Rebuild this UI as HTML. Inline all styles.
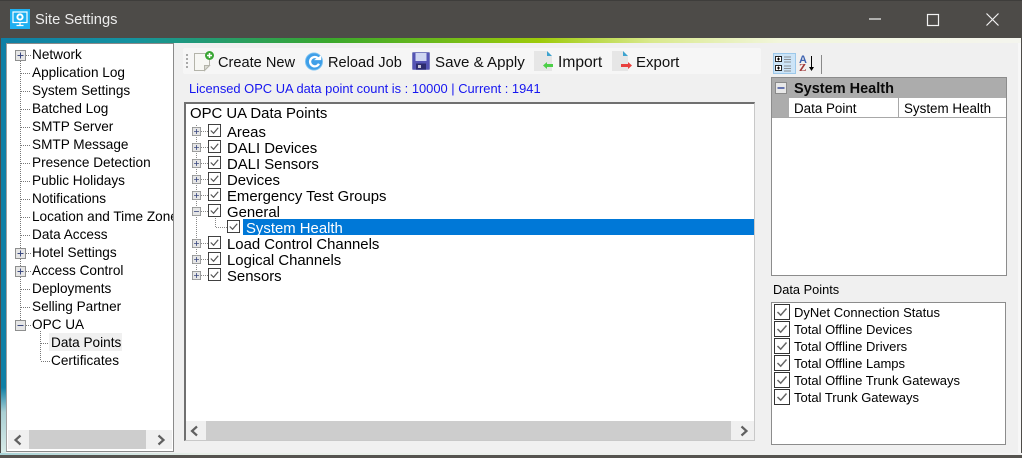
<!DOCTYPE html>
<html><head><meta charset="utf-8"><title>Site Settings</title>
<style>
html,body{margin:0;padding:0;width:1022px;height:458px;overflow:hidden;background:#f0f0f0}
body{position:relative;font-family:"Liberation Sans",sans-serif;color:#000}
div,span,svg{position:absolute}
.t{white-space:nowrap;line-height:18px;height:18px}
.l{font-size:13.6px}
.m{font-size:14.9px}
.r{font-size:13px}
.b{line-height:20px;height:20px;top:53px;color:#111}
</style></head><body>
<svg width="0" height="0" style="position:absolute">
<defs>
<symbol id="p" viewBox="0 0 11 11"><rect x=".5" y=".5" width="10" height="10" fill="#e6e6e6" stroke="#8e8f8f"/><path d="M2.500 5.500h6M5.500 2.500v6" stroke="#3c4a80" fill="none"/></symbol>
<symbol id="n" viewBox="0 0 11 11"><rect x=".5" y=".5" width="10" height="10" fill="#e6e6e6" stroke="#8e8f8f"/><path d="M2.500 5.500h6" stroke="#3c4a80" fill="none"/></symbol>
<symbol id="c" viewBox="0 0 14 14"><rect x=".5" y=".5" width="13" height="13" fill="#fff" stroke="#333"/><path d="M3 7l3 3 5-6" stroke="#555" stroke-width="1.300" fill="none"/></symbol>
<symbol id="d" viewBox="0 0 16 16"><rect x=".5" y=".5" width="15" height="15" fill="#fff" stroke="#333"/><path d="M3.500 8l3.200 3.200 5.800-6.700" stroke="#666" stroke-width="1.500" fill="none"/></symbol>
</defs></svg>

<!-- title bar -->
<div style="left:0;top:0;width:1022px;height:38px;background:#4d4b48;border-top:1px solid #3e3d3b;box-sizing:border-box"></div>
<svg style="left:10px;top:9px" width="20" height="20" viewBox="0 0 20 20"><rect width="20" height="20" fill="#1fb0f0"/><rect x="3" y="3" width="14" height="10.500" fill="none" stroke="#fff" stroke-width="1.200"/><circle cx="10" cy="8" r="2.600" fill="none" stroke="#fff" stroke-width="2"/><path d="M10 13.500v2.500M6.500 16.500h7" stroke="#fff" stroke-width="1.300"/></svg>
<div class="t" style="left:35px;top:10px;font-size:14.700px;line-height:20px;height:20px;color:#ececec">Site Settings</div>
<svg style="left:860px;top:8px" width="150" height="24" viewBox="0 0 150 24" fill="none" stroke="#f2f2f2" stroke-width="1.200"><path d="M9 11h12"/><rect x="67.500" y="6.500" width="11" height="11"/><path d="M126.500 5.500l12 12M138.500 5.500l-12 12"/></svg>

<!-- coloured frame -->
<div style="left:0;top:38px;width:1022px;height:5px;background:linear-gradient(90deg,#0f7fa5 0,#1492a0 130px,#3aa82c 330px,#9ecb0a 540px,#d9e98c 650px,#f2f6dc 780px,#f4f5ee 1022px)"></div>
<div style="left:0;top:38px;width:1px;height:420px;background:#4d4b48"></div>
<div style="left:1px;top:43px;width:5px;height:410px;background:linear-gradient(180deg,#0f7fa5 0,#0f7fa5 84%,#a9cfd3 90%,#d8ebe8 100%)"></div>
<div style="left:1018px;top:43px;width:3px;height:410px;background:#f7f7f7"></div>
<div style="left:1021px;top:38px;width:1px;height:420px;background:#4d4b48"></div>
<div style="left:0;top:453px;width:1022px;height:2px;background:linear-gradient(90deg,#a8d3d6,#e8efe8 200px,#f2f2f2 1022px)"></div>
<div style="left:0;top:455px;width:1022px;height:3px;background:#55534f"></div>

<!-- left tree -->
<div style="left:6px;top:43px;width:168px;height:409px;box-sizing:border-box;background:#fff;border:1px solid #8a8a8a;border-left-color:#a0a0a0"></div>
<div style="left:49px;top:333px;width:73px;height:18px;background:#f0f0f0"></div>
<svg style="left:0;top:1px" width="180" height="380" fill="none" stroke="#777" stroke-dasharray="1 1"><path d="M20.500 60v260M26 54.500h5M21 72.500h10M21 90.500h10M21 108.500h10M21 126.500h10M21 144.500h10M21 162.500h10M21 180.500h10M21 198.500h10M21 216.500h10M21 234.500h10M26 252.500h5M26 270.500h5M21 288.500h10M21 306.500h10M26 324.500h5M40.500 330v30M41 342.500h8M41 360.500h9"/></svg>
<svg style="left:15px;top:50px" width="11" height="11"><use href="#p"/></svg>
<svg style="left:15px;top:248px" width="11" height="11"><use href="#p"/></svg>
<svg style="left:15px;top:266px" width="11" height="11"><use href="#p"/></svg>
<svg style="left:15px;top:320px" width="11" height="11"><use href="#n"/></svg>
<div class="t l" style="left:32px;top:46px">Network</div>
<div class="t l" style="left:32px;top:64px">Application Log</div>
<div class="t l" style="left:32px;top:82px">System Settings</div>
<div class="t l" style="left:32px;top:100px">Batched Log</div>
<div class="t l" style="left:32px;top:118px">SMTP Server</div>
<div class="t l" style="left:32px;top:136px">SMTP Message</div>
<div class="t l" style="left:32px;top:154px">Presence Detection</div>
<div class="t l" style="left:32px;top:172px">Public Holidays</div>
<div class="t l" style="left:32px;top:190px">Notifications</div>
<div class="t l" style="left:32px;top:208px;width:141px;overflow:hidden">Location and Time Zone</div>
<div class="t l" style="left:32px;top:226px">Data Access</div>
<div class="t l" style="left:32px;top:244px">Hotel Settings</div>
<div class="t l" style="left:32px;top:262px">Access Control</div>
<div class="t l" style="left:32px;top:280px">Deployments</div>
<div class="t l" style="left:32px;top:298px">Selling Partner</div>
<div class="t l" style="left:32px;top:316px">OPC UA</div>
<div class="t l" style="left:51px;top:334px">Data Points</div>
<div class="t l" style="left:51px;top:352px">Certificates</div>
<!-- left scrollbar -->
<div style="left:8px;top:430px;width:164px;height:19px;background:#f0f0f0"></div>
<div style="left:29px;top:430px;width:117px;height:19px;background:#cdcdcd"></div>
<svg style="left:10px;top:433px" width="160" height="14" fill="none" stroke="#606060" stroke-width="2.200"><path d="M10.500 2.500l-5 4.500 5 4.500M148.500 2.500l5 4.500-5 4.500"/></svg>

<!-- toolbar -->
<div style="left:183px;top:48px;width:578px;height:26px;background:#f6f6f6;border-radius:2px"></div>
<svg style="left:186px;top:53px" width="3" height="16" fill="#a8a8a8"><rect width="2" height="2" y="1"/><rect width="2" height="2" y="5"/><rect width="2" height="2" y="9"/><rect width="2" height="2" y="13"/></svg>
<svg style="left:193px;top:50px" width="24" height="24" viewBox="0 0 24 24"><path d="M1.500 3.500h15v12l-5 5h-10z" fill="#f7f7f4" stroke="#b4b4aa"/><path d="M16.500 15.500h-5v5z" fill="#dcdcd4" stroke="#b4b4aa"/><circle cx="16.500" cy="5.500" r="4.500" fill="#3aa635"/><path d="M14 5.500h5M16.500 3v5" stroke="#fff" stroke-width="1.500"/></svg>
<div class="t b" style="left:218px;font-size:14.600px">Create New</div>
<svg style="left:305px;top:52px" width="18" height="19" viewBox="0 0 20 20"><circle cx="10" cy="10" r="9.500" fill="#3f9fe8"/><circle cx="10" cy="10" r="9.500" fill="none" stroke="#7cc3f3"/><path d="M14.500 6.500a5.200 5.200 0 1 0 1 6" fill="none" stroke="#fff" stroke-width="2.500"/><path d="M10 8.500h8V3z" fill="#fff"/></svg>
<div class="t b" style="left:328px;font-size:14.600px">Reload Job</div>
<svg style="left:412px;top:52px" width="18" height="18" viewBox="0 0 18 18"><rect x=".5" y=".5" width="17" height="17" rx="1" fill="#5454b4" stroke="#7a7ec0"/><rect x="3.500" y="1" width="11" height="8" fill="#cfd6f2"/><rect x="4" y="11.500" width="10" height="6" fill="#2c2c6e"/><rect x="6" y="13" width="3" height="3" fill="#c8c8d8"/></svg>
<div class="t b" style="left:435px;font-size:15.100px">Save &amp; Apply</div>
<svg style="left:534px;top:51px" width="22" height="22" viewBox="0 0 22 22"><path d="M0 0h13l5 5v15H0z" fill="#e6e6e6"/><path d="M13 0l5 5h-5z" fill="#3ea3cf"/><path d="M9 14.500l4-3.500v2h6v3h-6v2z" fill="#4ccf48"/></svg>
<div class="t b" style="left:558px;font-size:15.600px">Import</div>
<svg style="left:612px;top:51px" width="22" height="22" viewBox="0 0 22 22"><path d="M0 0h11l5 5v15H0z" fill="#e6e6e6"/><path d="M11 0l5 5h-5z" fill="#3ea3cf"/><path d="M20 14.500l-4-3.500v2H9v3h7v2z" fill="#e8403e"/></svg>
<div class="t b" style="left:636px;font-size:15px">Export</div>
<div class="t" style="left:189px;top:80px;font-size:12.900px;color:#1616f0">Licensed OPC UA data point count is : 10000 | Current : 1941</div>

<!-- main tree -->
<div style="left:184px;top:102px;width:571px;height:339px;box-sizing:border-box;background:#fff;border:1px solid #8a8a8a;border-width:2px 1px 1px 2px;border-color:#707070 #c8c8c8 #c8c8c8 #707070"></div>
<div class="t m" style="left:190px;top:105px">OPC UA Data Points</div>
<svg style="left:0;top:0" width="300" height="300" fill="none" stroke="#888" stroke-dasharray="1 1"><path d="M196.500 125v151M201 131.500h7M201 147.500h7M201 163.500h7M201 179.500h7M201 195.500h7M201 211.500h7M201 243.500h7M201 259.500h7M201 275.500h7M215.500 218v10M216 227.500h12"/></svg>
<svg style="left:192px;top:127px" width="9" height="9" viewBox="0 0 11 11"><use href="#p"/></svg>
<svg style="left:192px;top:143px" width="9" height="9" viewBox="0 0 11 11"><use href="#p"/></svg>
<svg style="left:192px;top:159px" width="9" height="9" viewBox="0 0 11 11"><use href="#p"/></svg>
<svg style="left:192px;top:175px" width="9" height="9" viewBox="0 0 11 11"><use href="#p"/></svg>
<svg style="left:192px;top:191px" width="9" height="9" viewBox="0 0 11 11"><use href="#p"/></svg>
<svg style="left:192px;top:207px" width="9" height="9" viewBox="0 0 11 11"><use href="#n"/></svg>
<svg style="left:192px;top:239px" width="9" height="9" viewBox="0 0 11 11"><use href="#p"/></svg>
<svg style="left:192px;top:255px" width="9" height="9" viewBox="0 0 11 11"><use href="#p"/></svg>
<svg style="left:192px;top:271px" width="9" height="9" viewBox="0 0 11 11"><use href="#p"/></svg>
<svg style="left:208px;top:124px" width="13" height="13" viewBox="0 0 14 14"><use href="#c"/></svg>
<svg style="left:208px;top:140px" width="13" height="13" viewBox="0 0 14 14"><use href="#c"/></svg>
<svg style="left:208px;top:156px" width="13" height="13" viewBox="0 0 14 14"><use href="#c"/></svg>
<svg style="left:208px;top:172px" width="13" height="13" viewBox="0 0 14 14"><use href="#c"/></svg>
<svg style="left:208px;top:188px" width="13" height="13" viewBox="0 0 14 14"><use href="#c"/></svg>
<svg style="left:208px;top:204px" width="13" height="13" viewBox="0 0 14 14"><use href="#c"/></svg>
<svg style="left:227px;top:220px" width="13" height="13" viewBox="0 0 14 14"><use href="#c"/></svg>
<svg style="left:208px;top:236px" width="13" height="13" viewBox="0 0 14 14"><use href="#c"/></svg>
<svg style="left:208px;top:252px" width="13" height="13" viewBox="0 0 14 14"><use href="#c"/></svg>
<svg style="left:208px;top:268px" width="13" height="13" viewBox="0 0 14 14"><use href="#c"/></svg>
<div class="t m" style="left:227px;top:124px;height:16px;overflow:hidden">Areas</div>
<div class="t m" style="left:227px;top:140px;height:16px;overflow:hidden">DALI Devices</div>
<div class="t m" style="left:227px;top:156px;height:16px;overflow:hidden">DALI Sensors</div>
<div class="t m" style="left:227px;top:172px;height:16px;overflow:hidden">Devices</div>
<div class="t m" style="left:227px;top:188px;height:16px;overflow:hidden">Emergency Test Groups</div>
<div class="t m" style="left:227px;top:204px;height:16px;overflow:hidden">General</div>
<div style="left:243px;top:219px;width:511px;height:16px;background:#0078d7"></div>
<div class="t m" style="left:246px;top:220px;height:15px;overflow:hidden;color:#fff">System Health</div>
<div class="t m" style="left:227px;top:236px;height:16px;overflow:hidden">Load Control Channels</div>
<div class="t m" style="left:227px;top:252px;height:16px;overflow:hidden">Logical Channels</div>
<div class="t m" style="left:227px;top:268px;height:16px;overflow:hidden">Sensors</div>
<!-- main scrollbar -->
<div style="left:186px;top:421px;width:568px;height:19px;background:#f0f0f0"></div>
<div style="left:206px;top:421px;width:525px;height:19px;background:#cdcdcd"></div>
<svg style="left:186px;top:424px" width="568" height="14" fill="none" stroke="#606060" stroke-width="2.200"><path d="M11 2.500l-5 4.500 5 4.500M555.500 2.500l5 4.500-5 4.500"/></svg>

<!-- right toolbar -->
<div style="left:773px;top:53px;width:23px;height:21px;box-sizing:border-box;background:#cce4f7;border:1px solid #9cc8ea"></div>
<svg style="left:775px;top:55px" width="50" height="20" viewBox="0 0 50 20" fill="none"><rect x=".5" y="1.500" width="6" height="5" fill="#fff" stroke="#222"/><rect x=".5" y="10.500" width="6" height="5" fill="#fff" stroke="#222"/><path d="M2 4h3M2 13h3M3.500 2.500v3M3.500 11.500v3" stroke="#000"/><path d="M9 2h7M9 4.500h7M9 7h7M9 11h7M9 13.500h7M9 16h7" stroke="#8a8f96"/><path d="M36.500 1v12" stroke="#000"/><path d="M34 12h5l-2.500 4z" fill="#000"/><path d="M46.500 -1v20" stroke="#8a8a8a"/></svg>
<div class="t" style="left:799px;top:55px;font:bold 11px/10px 'Liberation Sans',sans-serif;height:10px;color:#3d62b0">A</div>
<div class="t" style="left:799px;top:63px;font:bold 11px/10px 'Liberation Serif',serif;height:10px;color:#a03838">Z</div>

<!-- property grid -->
<div style="left:771px;top:77px;width:236px;height:199px;box-sizing:border-box;background:#fff;border:1px solid #8c8c8c"></div>
<div style="left:772px;top:78px;width:234px;height:20px;background:#acacac"></div>
<div style="left:772px;top:98px;width:17px;height:19px;background:#acacac"></div>
<div style="left:772px;top:117px;width:234px;height:1px;background:#a8a8a8"></div>
<div style="left:898px;top:98px;width:1px;height:19px;background:#a8a8a8"></div>
<svg style="left:775px;top:82px" width="12" height="12" viewBox="0 0 12 12"><rect x=".5" y=".5" width="11" height="11" fill="#e8e8e8" stroke="#8a8a8a"/><path d="M2.500 6h7" stroke="#3c4f9c" stroke-width="1.500"/></svg>
<div class="t" style="left:794px;top:80px;font-size:14.500px;font-weight:bold;color:#0a0a0a">System Health</div>
<div class="t r" style="left:794px;top:100px;font-size:13.400px">Data Point</div>
<div class="t r" style="left:904px;top:100px;font-size:13.400px">System Health</div>

<!-- data points list -->
<div class="t r" style="left:773px;top:281px;font-size:12.800px">Data Points</div>
<div style="left:771px;top:302px;width:235px;height:143px;box-sizing:border-box;background:#fff;border:1px solid #8c8c8c"></div>
<svg style="left:774px;top:304px" width="16" height="16"><use href="#d"/></svg>
<svg style="left:774px;top:321px" width="16" height="16"><use href="#d"/></svg>
<svg style="left:774px;top:338px" width="16" height="16"><use href="#d"/></svg>
<svg style="left:774px;top:355px" width="16" height="16"><use href="#d"/></svg>
<svg style="left:774px;top:372px" width="16" height="16"><use href="#d"/></svg>
<svg style="left:774px;top:389px" width="16" height="16"><use href="#d"/></svg>
<div class="t r" style="left:794px;top:304px">DyNet Connection Status</div>
<div class="t r" style="left:794px;top:321px">Total Offline Devices</div>
<div class="t r" style="left:794px;top:338px">Total Offline Drivers</div>
<div class="t r" style="left:794px;top:355px">Total Offline Lamps</div>
<div class="t r" style="left:794px;top:372px">Total Offline Trunk Gateways</div>
<div class="t r" style="left:794px;top:389px">Total Trunk Gateways</div>
</body></html>
